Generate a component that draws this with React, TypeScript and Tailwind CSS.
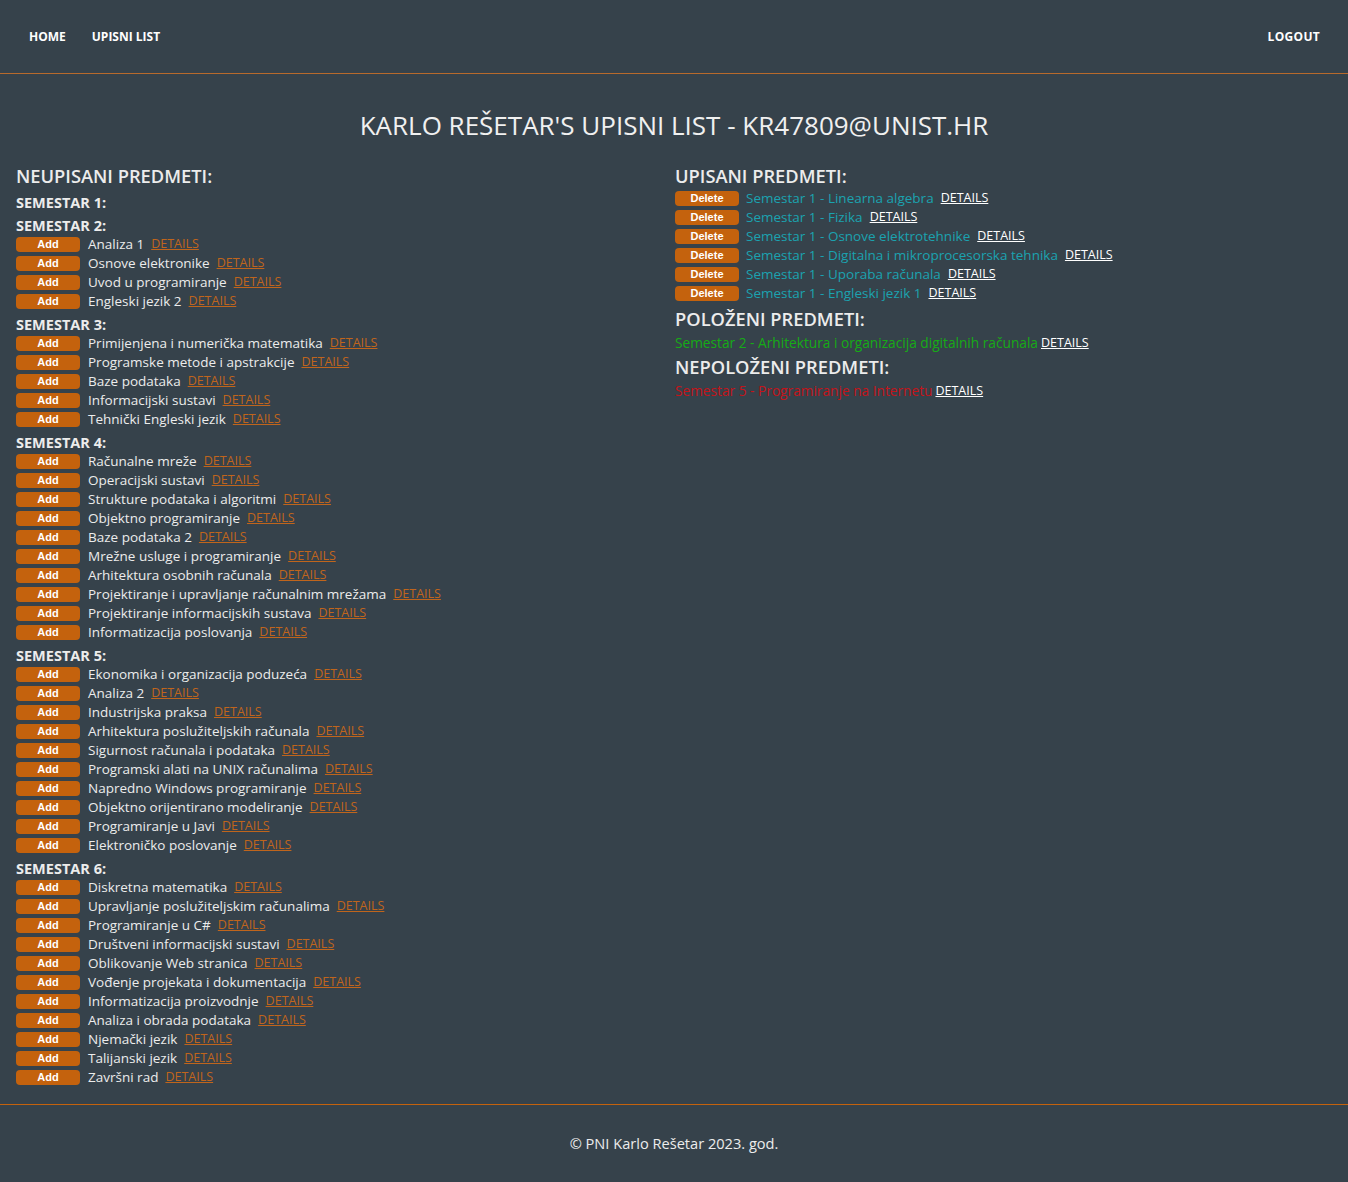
import React from 'react';

type Semester = { title: string; subjects: string[] };

const neupisani: Semester[] = [
  { title: 'SEMESTAR 1:', subjects: [] },
  { title: 'SEMESTAR 2:', subjects: ['Analiza 1', 'Osnove elektronike', 'Uvod u programiranje', 'Engleski jezik 2'] },
  {
    title: 'SEMESTAR 3:',
    subjects: [
      'Primijenjena i numerička matematika',
      'Programske metode i apstrakcije',
      'Baze podataka',
      'Informacijski sustavi',
      'Tehnički Engleski jezik',
    ],
  },
  {
    title: 'SEMESTAR 4:',
    subjects: [
      'Računalne mreže',
      'Operacijski sustavi',
      'Strukture podataka i algoritmi',
      'Objektno programiranje',
      'Baze podataka 2',
      'Mrežne usluge i programiranje',
      'Arhitektura osobnih računala',
      'Projektiranje i upravljanje računalnim mrežama',
      'Projektiranje informacijskih sustava',
      'Informatizacija poslovanja',
    ],
  },
  {
    title: 'SEMESTAR 5:',
    subjects: [
      'Ekonomika i organizacija poduzeća',
      'Analiza 2',
      'Industrijska praksa',
      'Arhitektura poslužiteljskih računala',
      'Sigurnost računala i podataka',
      'Programski alati na UNIX računalima',
      'Napredno Windows programiranje',
      'Objektno orijentirano modeliranje',
      'Programiranje u Javi',
      'Elektroničko poslovanje',
    ],
  },
  {
    title: 'SEMESTAR 6:',
    subjects: [
      'Diskretna matematika',
      'Upravljanje poslužiteljskim računalima',
      'Programiranje u C#',
      'Društveni informacijski sustavi',
      'Oblikovanje Web stranica',
      'Vođenje projekata i dokumentacija',
      'Informatizacija proizvodnje',
      'Analiza i obrada podataka',
      'Njemački jezik',
      'Talijanski jezik',
      'Završni rad',
    ],
  },
];

const upisani = [
  'Semestar 1 - Linearna algebra',
  'Semestar 1 - Fizika',
  'Semestar 1 - Osnove elektrotehnike',
  'Semestar 1 - Digitalna i mikroprocesorska tehnika',
  'Semestar 1 - Uporaba računala',
  'Semestar 1 - Engleski jezik 1',
];

const font = "font-['Open_Sans',sans-serif]";
const heading = 'text-[18.3px] leading-[26px] font-semibold';

const ActionButton: React.FC<{ label: string }> = ({ label }) => (
  <button
    type="button"
    className="w-16 h-[15px] shrink-0 rounded bg-[#c4620d] text-white text-[11px] font-bold leading-[15px] font-['Liberation_Sans',Arial,sans-serif]"
  >
    {label}
  </button>
);

const App: React.FC = () => {
  return (
    <div className={`min-h-screen bg-[#36424b] text-[#ececec] ${font}`}>
      {/* Navbar */}
      <nav className="h-[74px] flex items-center justify-between px-[28px] border-b border-[#b86a2c]">
        <div className="flex items-center gap-[26px] text-[12px] font-bold text-white">
          <a href="#" className="pl-[1px]">HOME</a>
          <a href="#">UPISNI LIST</a>
        </div>
        <a href="#" className="text-[12px] font-bold text-white tracking-[0.3px]">LOGOUT</a>
      </nav>

      <main className="px-4 pb-[17px]">
        <h1 className="text-center text-[26px] leading-[30px] mt-[36px] text-[#f0f0f0]">
          KARLO REŠETAR&apos;S UPISNI LIST - KR47809@UNIST.HR
        </h1>

        <div className="grid grid-cols-2 mt-[23px]">
          {/* Left column */}
          <section>
            <h2 className={heading}>NEUPISANI PREDMETI:</h2>
            {neupisani.map((sem) => (
              <div key={sem.title}>
                <h3 className="mt-1 text-[14.5px] leading-[19px] font-bold">{sem.title}</h3>
                {sem.subjects.map((s) => (
                  <div key={s} className="h-[19px] flex items-center gap-2 text-[13.5px]">
                    <ActionButton label="Add" />
                    <span>{s}</span>
                    <a href="#" className="-ml-[1px] underline text-[12.5px] text-[#c0651c]">DETAILS</a>
                  </div>
                ))}
              </div>
            ))}
          </section>

          {/* Right column */}
          <section className="pl-[1px]">
            <h2 className={heading}>UPISANI PREDMETI:</h2>
            {upisani.map((s) => (
              <div key={s} className="h-[19px] flex items-center gap-[7px] text-[13.5px]">
                <ActionButton label="Delete" />
                <span className="text-[#1ba2b0]">{s}</span>
                <a href="#" className="underline text-[12.5px] text-white">DETAILS</a>
              </div>
            ))}
            <h2 className={`mt-[3px] ${heading}`}>POLOŽENI PREDMETI:</h2>
            <div className="h-[22px] flex items-center gap-[3px] text-[13.7px]">
              <span className="text-[#16ab16]">Semestar 2 - Arhitektura i organizacija digitalnih računala</span>
              <a href="#" className="underline text-[12.5px] text-white">DETAILS</a>
            </div>
            <h2 className={heading}>NEPOLOŽENI PREDMETI:</h2>
            <div className="h-[22px] flex items-center gap-[3px] text-[13.7px]">
              <span className="text-[#c4141a]">Semestar 5 - Programiranje na Internetu</span>
              <a href="#" className="underline text-[12.5px] text-white">DETAILS</a>
            </div>
          </section>
        </div>
      </main>

      <footer className="h-[78px] border-t border-[#c4620d] flex items-center justify-center text-[14.6px] text-[#ececec]">
        © PNI Karlo Rešetar 2023. god.
      </footer>
    </div>
  );
};

export default App;
